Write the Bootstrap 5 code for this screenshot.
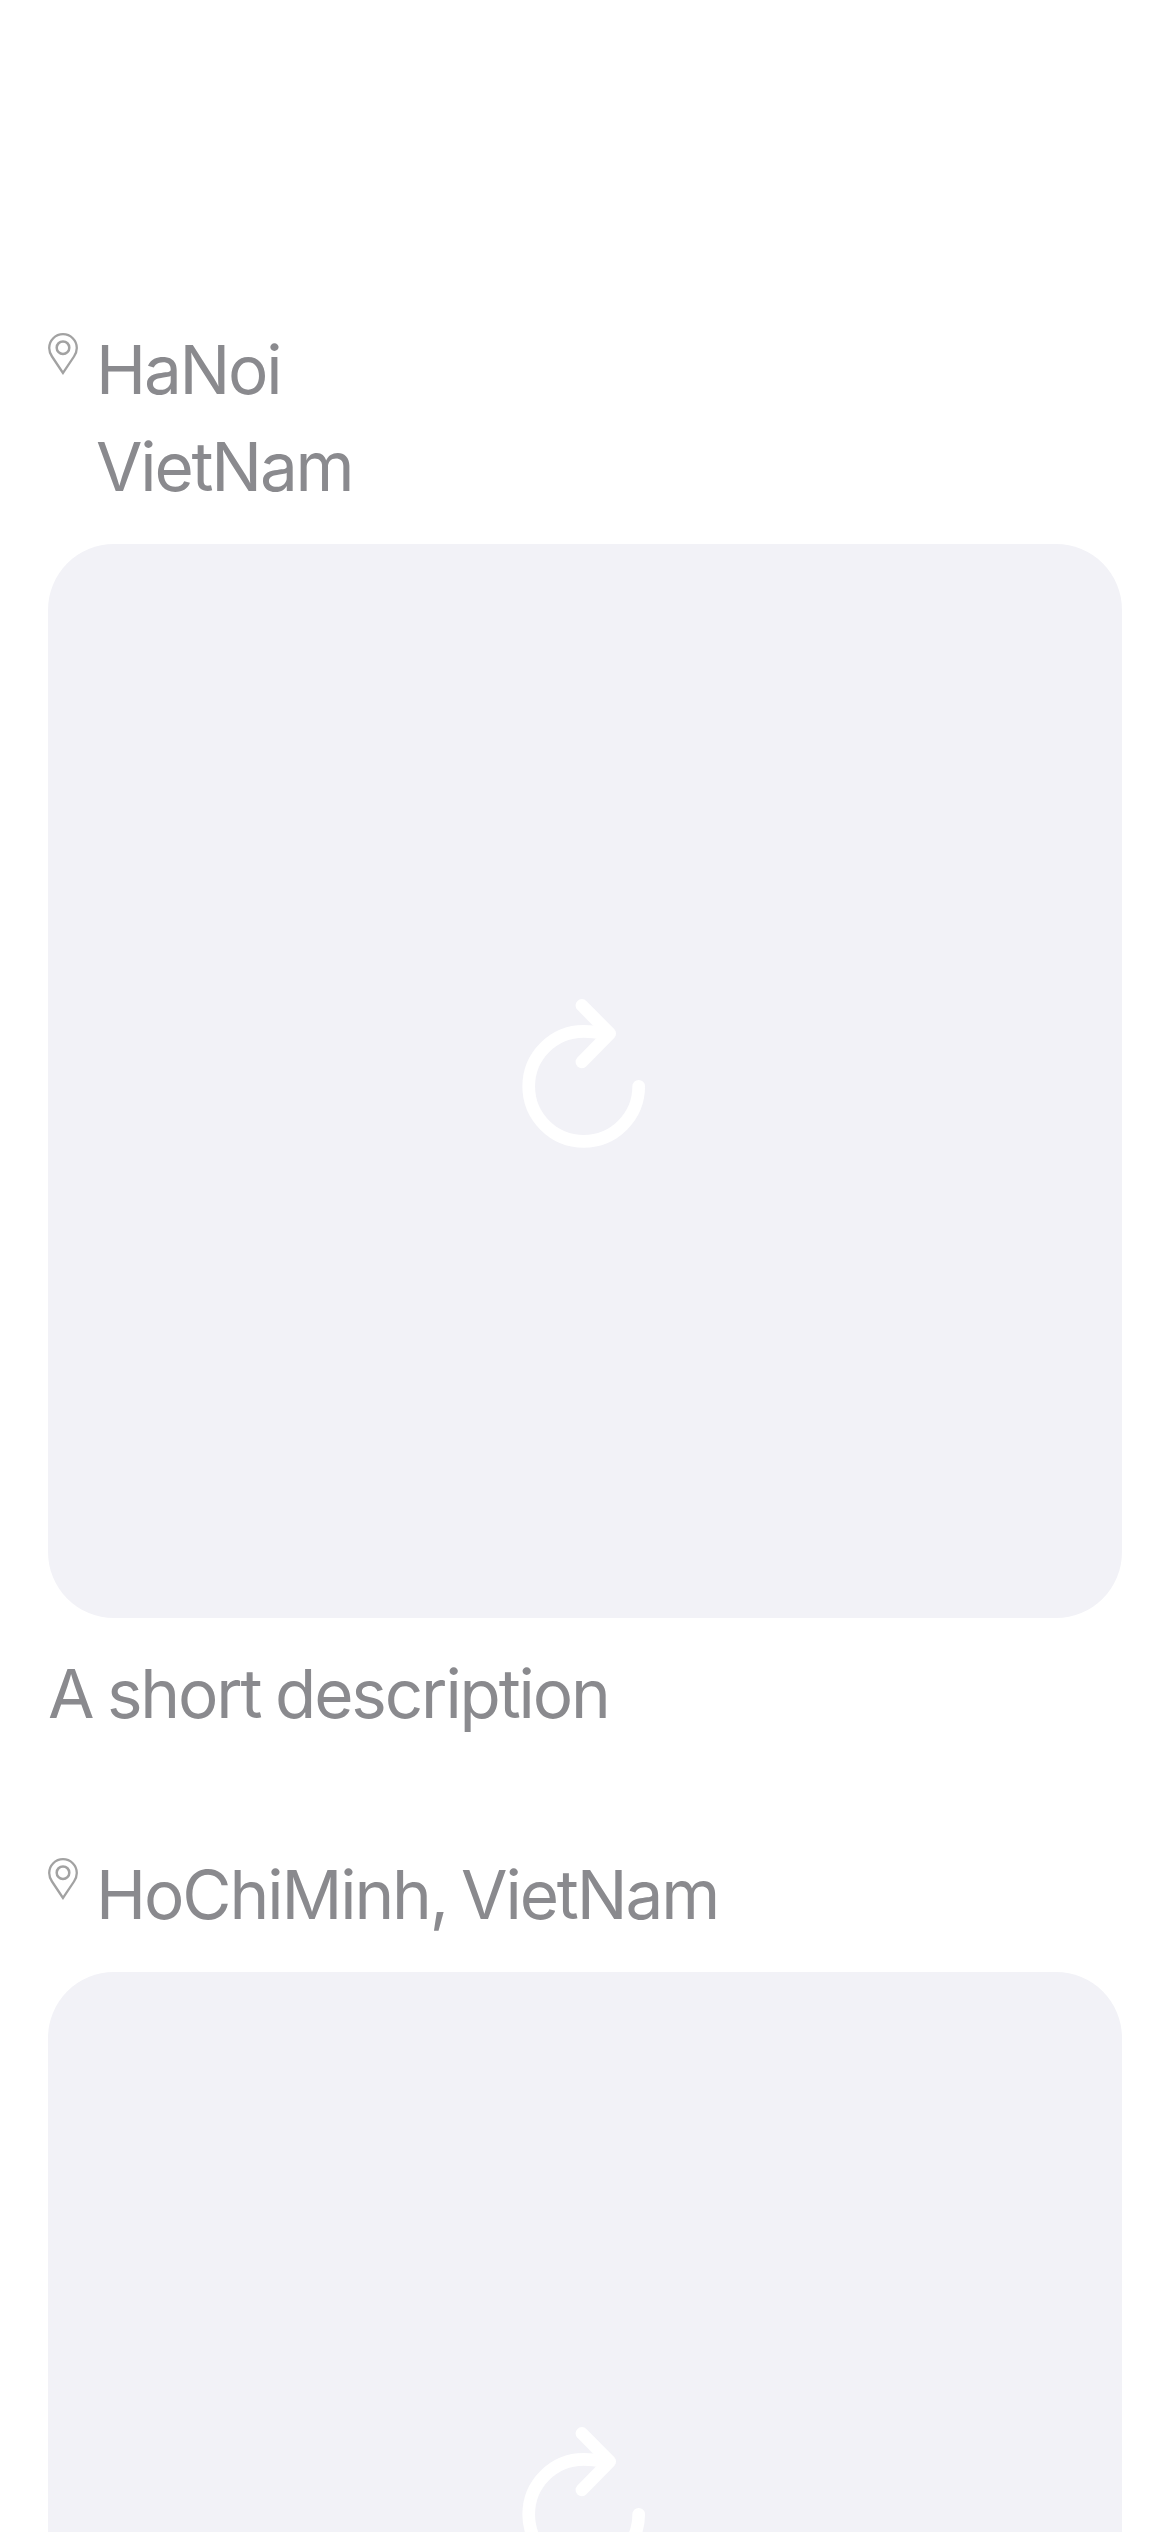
<!DOCTYPE html>
<html lang="en">
<head>
<meta charset="utf-8">
<meta name="viewport" content="width=device-width, initial-scale=1">
<title>Places</title>
<link href="https://cdn.jsdelivr.net/npm/bootstrap@5.3.0/dist/css/bootstrap.min.css" rel="stylesheet">
<style>
body { font-family: Inter, "Liberation Sans", sans-serif; font-size: 67.4px; line-height: 97px; color: #8a8a8e; }
.feed { height: 2532px; padding: 321px 48px 0; gap: 104px; }
.place-head { gap: 18px; margin-bottom: 29px; }
.pin { width: 30px; height: 43px; margin-top: 12px; }
.photo { height: 1074px; border-radius: 66px; background: #f2f2f7; }
.caption-text { margin-top: 27px; }
.t-place { letter-spacing: -2.2px; }
.t-long { letter-spacing: -2.1px; word-spacing: -3px; }
.t-desc { letter-spacing: -2.15px; word-spacing: -2.2px; }
</style>
<script src="https://cdn.jsdelivr.net/npm/bootstrap@5.3.0/dist/js/bootstrap.bundle.min.js"></script>
</head>
<body class="bg-white overflow-hidden">
<svg class="d-none">
  <symbol id="pin" viewBox="0 0 30 43">
    <path d="M15 40 4 23.500C2 20.400 1.200 18 1.200 15a13.800 13.800 0 0 1 27.600 0c0 3-.8 5.400-2.800 8.500Z" fill="none" stroke="#a2a2a2" stroke-width="2.300"/>
    <circle cx="15" cy="14.700" r="6.300" fill="none" stroke="#a2a2a2" stroke-width="2.500"/>
  </symbol>
  <symbol id="reload" viewBox="0 0 170 170">
    <g fill="none" stroke="#fff" stroke-width="12.700" stroke-linecap="round" stroke-linejoin="round">
      <path d="M138.700 90.300A55 55 0 1 1 83.700 35.300Q93 35.300 103 37.300"/>
      <path d="M81.900 9.400 109.700 37.500 81.900 65.900"/>
    </g>
  </symbol>
</svg>
<main class="feed d-flex flex-column overflow-hidden">
  <article class="flex-shrink-0">
    <header class="place-head d-flex align-items-start">
      <svg class="pin flex-shrink-0"><use href="#pin"/></svg>
      <div class="d-flex flex-column align-items-start text-nowrap">
        <span class="t-place">HaNoi</span>
        <span class="t-place">VietNam</span>
      </div>
    </header>
    <div class="photo d-flex align-items-center justify-content-center">
      <svg width="170" height="170"><use href="#reload"/></svg>
    </div>
    <p class="caption-text mb-0 text-nowrap"><span class="t-desc">A short description</span></p>
  </article>
  <article class="flex-shrink-0">
    <header class="place-head d-flex align-items-start">
      <svg class="pin flex-shrink-0"><use href="#pin"/></svg>
      <span class="t-long text-nowrap">HoChiMinh, VietNam</span>
    </header>
    <div class="photo d-flex align-items-center justify-content-center">
      <svg width="170" height="170"><use href="#reload"/></svg>
    </div>
  </article>
</main>
</body>
</html>
